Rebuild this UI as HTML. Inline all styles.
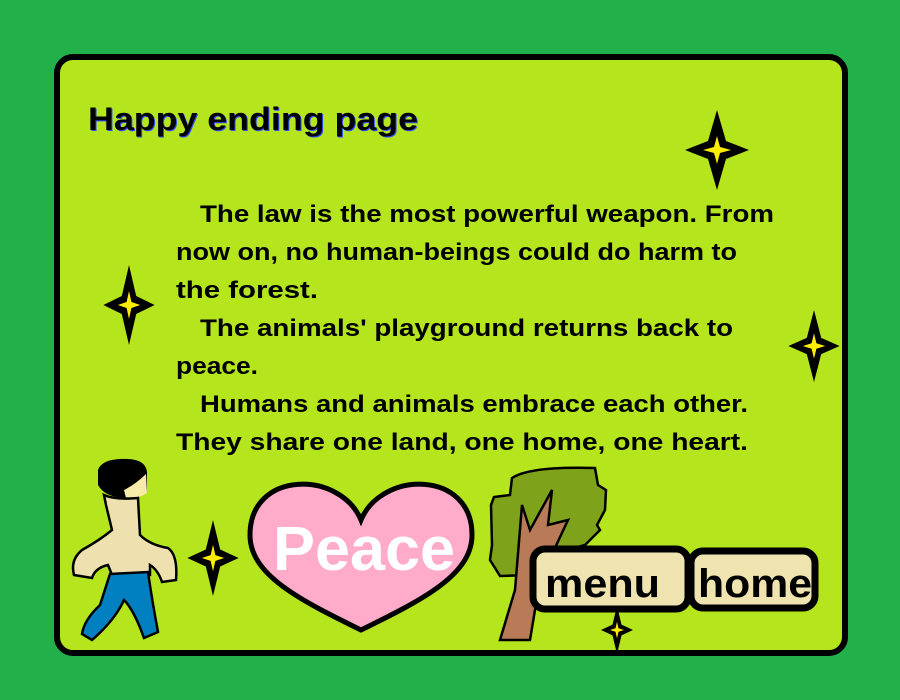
<!DOCTYPE html>
<html><head><style>
html,body{margin:0;padding:0;background:#22b04b;width:900px;height:700px;overflow:hidden}
svg{display:block}
text{font-family:"Liberation Sans",sans-serif;font-weight:bold}
</style></head><body>
<svg width="900" height="700" viewBox="0 0 900 700">
<defs>
<g id="star"><path d="M0,-40 L9,-9 L32,0 L9,9 L0,40 L-9,9 L-32,0 L-9,-9Z" fill="#000"/><path d="M0,-14 L3,-3 L14,0 L3,3 L0,14 L-3,3 L-14,0 L-3,-3Z" fill="#ffee00"/></g>
</defs>
<rect x="57" y="57" width="788" height="596" rx="16" fill="#b5e61d" stroke="#000" stroke-width="6"/>
<text x="89" y="131" font-size="32" textLength="330" lengthAdjust="spacingAndGlyphs" fill="#3050ff">Happy ending page</text>
<text x="88" y="130" font-size="32" textLength="330" lengthAdjust="spacingAndGlyphs" fill="#000">Happy ending page</text>
<g font-size="24" fill="#000">
<text x="200" y="222" textLength="574" lengthAdjust="spacingAndGlyphs">The law is the most powerful weapon. From</text>
<text x="176" y="260" textLength="561" lengthAdjust="spacingAndGlyphs">now on, no human-beings could do harm to</text>
<text x="176" y="298" textLength="142" lengthAdjust="spacingAndGlyphs">the forest.</text>
<text x="200" y="336" textLength="533" lengthAdjust="spacingAndGlyphs">The animals' playground returns back to</text>
<text x="176" y="374" textLength="82" lengthAdjust="spacingAndGlyphs">peace.</text>
<text x="200" y="412" textLength="548" lengthAdjust="spacingAndGlyphs">Humans and animals embrace each other.</text>
<text x="176" y="450" textLength="572" lengthAdjust="spacingAndGlyphs">They share one land, one home, one heart.</text>
</g>
<use href="#star" transform="translate(717,150)"/>
<use href="#star" transform="translate(129,305) scale(0.8,1)"/>
<use href="#star" transform="translate(814,346) scale(0.8,0.9)"/>
<use href="#star" transform="translate(213,558) scale(0.8,0.95)"/>
<use href="#star" transform="translate(617,630) scale(0.5,0.6)"/>
<!-- person -->
<path d="M98,470 Q102,458 128,459 Q148,460 147,475 L147,492 Q135,500 122,498 Q104,496 98,485Z" fill="#000"/>
<path d="M124,490 Q136,484 146,474 L147,493 Q136,500 126,498Z" fill="#f8eaa8"/>
<path d="M104,495 Q115,500 138,498 L140,535 Q150,545 168,548 Q178,555 176,580 L162,582 Q158,570 150,565 L150,575 L112,575 L108,565 Q95,568 92,578 L74,575 Q70,560 82,550 Q100,540 112,530 L106,505Z" fill="#efe0b0" stroke="#000" stroke-width="2.5"/>
<path d="M110,574 L148,572 Q152,600 158,632 L144,638 Q134,610 124,600 Q115,620 92,640 L82,634 Q84,620 100,605Z" fill="#0080c0" stroke="#000" stroke-width="2.5"/>
<!-- heart -->
<path d="M361,520 C340,470 250,470 250,535 C250,575 300,600 361,630 C422,600 472,575 472,535 C472,470 382,470 361,520Z" fill="#ffabc9" stroke="#000" stroke-width="5"/>
<text x="273" y="570" font-size="62" fill="#fff" textLength="182" lengthAdjust="spacingAndGlyphs">Peace</text>
<!-- tree -->
<path d="M512,478 Q530,466 595,468 L598,485 L606,490 L605,510 L597,525 L600,530 L585,545 L560,552 L530,575 L500,576 L490,560 L492,545 L491,505 L494,497 L510,495Z" fill="#7ea31a" stroke="#000" stroke-width="2.5"/>
<path d="M522,505 L530,530 L552,490 L548,525 L568,520 L540,580 L530,640 L500,640 L515,590Z" fill="#b97a57" stroke="#000" stroke-width="2.5"/>
<!-- buttons -->
<rect x="533" y="549" width="155" height="60" rx="12" fill="#efe4b0" stroke="#000" stroke-width="7"/>
<text x="545" y="597" font-size="40" fill="#000" textLength="115" lengthAdjust="spacingAndGlyphs">menu</text>
<rect x="691" y="551" width="124" height="57" rx="12" fill="#efe4b0" stroke="#000" stroke-width="7"/>
<text x="698" y="597" font-size="40" fill="#000" textLength="114" lengthAdjust="spacingAndGlyphs">home</text>
</svg>
</body></html>
